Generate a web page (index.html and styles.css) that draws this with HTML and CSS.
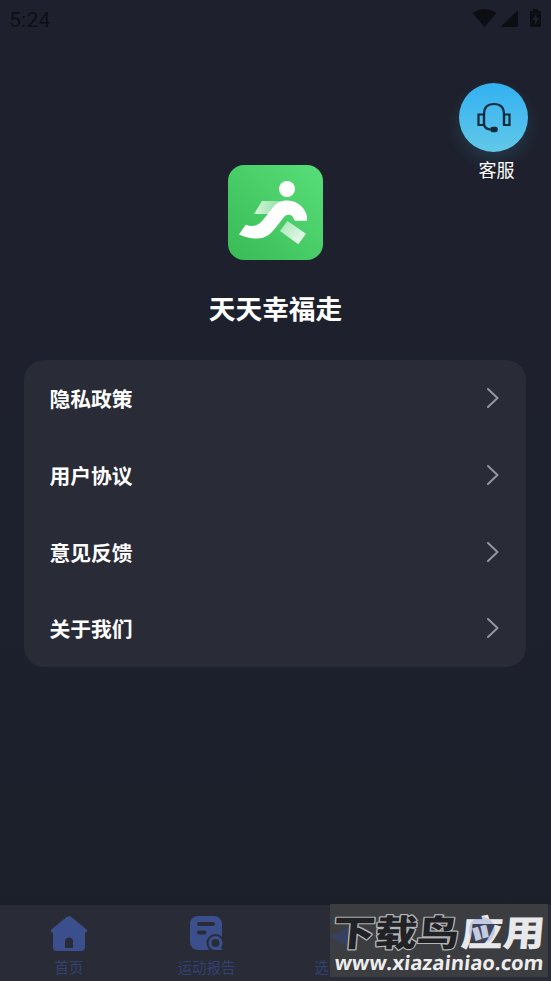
FILE: index.html
```html
<!DOCTYPE html>
<html lang="zh-CN">
<head>
<meta charset="utf-8">
<meta name="viewport" content="width=device-width, initial-scale=1">
<title>天天幸福走</title>
<link rel="stylesheet" href="styles.css">
</head>
<body>
<div class="app">
  <header class="status">
    <span class="time">5:24</span>
    <svg class="status-icons" width="72" height="22" viewBox="0 0 72 22">
      <path d="M.5 4Q12.500-4 24.500 4L12.500 18ZM28.500 18 46 1V18Z"/>
      <path fill-rule="evenodd" d="M61 0h5v2h3v16H58V2h3ZM64.500 4 60.500 11h2.500v5l4-7h-2.500Z"/>
    </svg>
  </header>

  <div class="support-row">
    <div class="support">
      <div class="support-disc">
        <svg width="34" height="32" viewBox="0 0 34 32" fill="none" stroke="#112b3c" stroke-width="2.200">
          <path d="M7 23V12C7 5.500 10.500 2 17 2s10 3.500 10 10V23M7 23c1.500 3.500 3.500 4.500 6.500 4.500"/>
          <path d="M1.500 12.500H7V23H1.500ZM27 12.500h5.500V23H27Z"/>
          <rect x="14" y="25.500" width="6" height="4" rx="1.500" fill="#112b3c" stroke-width="1.500"/>
        </svg>
      </div>
      <span class="support-label">客服</span>
    </div>
  </div>

  <section class="brand">
    <svg class="logo" width="95" height="95" viewBox="0 0 95 95">
      <defs>
        <linearGradient id="tile" x1="0" y1="1" x2="1" y2="0"><stop stop-color="#39bb56"/><stop offset="1" stop-color="#58df79"/></linearGradient>
        <linearGradient id="arm" x1="0" y1="0" x2="1" y2="0"><stop stop-color="#fff" stop-opacity=".8"/><stop offset="1" stop-color="#fff" stop-opacity=".3"/></linearGradient>
        <linearGradient id="leg" x1="0" y1="0" x2="1" y2="1"><stop stop-color="#fff" stop-opacity=".5"/><stop offset="1" stop-color="#fff" stop-opacity=".95"/></linearGradient>
      </defs>
      <rect width="95" height="95" rx="16" fill="url(#tile)"/>
      <path fill="url(#arm)" d="M34 36H57L45 49H26Z"/>
      <path fill="url(#leg)" d="M59.500 56 78 68.700 70.300 79.300 52 66Z"/>
      <circle cx="59" cy="24" r="8" fill="#fff"/>
      <path fill="#fff" d="M17.700 59.700C23 61.500 28 61.500 32 58C36 54.500 41 47 46 41C50 36.500 55 35.300 60 35.500C70 35.800 78 44 79 52V55.700H67.500C65.500 55.700 66 52 63.500 50.500C61 49 58 49.500 56 52L47 63.500C41 71 36 73.300 29 73.500C22 73.600 16 72 11 69.500Z"/>
    </svg>
    <h1>天天幸福走</h1>
  </section>

  <main class="menu">
    <div class="item"><span>隐私政策</span><svg class="chevron" viewBox="0 0 12 20"><path d="M1 1 10.500 10 1 19"/></svg></div>
    <div class="item"><span>用户协议</span><svg class="chevron" viewBox="0 0 12 20"><path d="M1 1 10.500 10 1 19"/></svg></div>
    <div class="item"><span>意见反馈</span><svg class="chevron" viewBox="0 0 12 20"><path d="M1 1 10.500 10 1 19"/></svg></div>
    <div class="item"><span>关于我们</span><svg class="chevron" viewBox="0 0 12 20"><path d="M1 1 10.500 10 1 19"/></svg></div>
  </main>

  <nav class="tabs">
    <div class="tab">
      <svg width="38" height="36" viewBox="0 0 38 36"><path fill-rule="evenodd" d="M16 1.500Q19-1 22 1.500L36.500 13.500Q38 15.500 36 16.500H35V31Q35 35 31 35H7Q3 35 3 31V16.500H2Q0 15.500 1.500 13.500ZM15 32H23V25.500C23 20 15 20 15 25.500Z"/></svg>
      <span>首页</span>
    </div>
    <div class="tab">
      <svg width="34" height="36" viewBox="0 0 34 36">
        <rect x="0" width="32" height="34" rx="8"/>
        <path class="cut" stroke-width="4" d="M9 8H23M9 16.500H14.500"/>
        <circle class="badge" cx="25.500" cy="27" r="9"/>
        <circle class="ring" cx="25.500" cy="27" r="5.500"/>
        <path d="M29 29 33 34H26Z"/>
      </svg>
      <span>运动报告</span>
    </div>
    <div class="tab tab-partial">
      <span>选</span>
    </div>
  </nav>

  <svg class="watermark" width="218" height="73" viewBox="0 0 218 73">
    <rect width="218" height="73" fill="#3b3d40"/>
    <path fill="#334684" fill-opacity=".45" d="M0 33 20 22V44Z"/>
    <g class="wm-title" transform="translate(0 42) skewX(-5)">
      <text class="wm-dark" x="2" y="0" textLength="126" lengthAdjust="spacingAndGlyphs">下载鸟</text>
      <text class="wm-light" x="130" y="0" textLength="84" lengthAdjust="spacingAndGlyphs">应用</text>
    </g>
    <circle cx="152" cy="26" r="13" fill="#4259b5" fill-opacity=".22"/>
    <g transform="translate(4 66) skewX(-6)">
      <text class="wm-url" x="0" y="0" textLength="209" lengthAdjust="spacingAndGlyphs">www.xiazainiao.com</text>
    </g>
  </svg>
</div>
</body>
</html>
```
FILE: styles.css
```css
* { box-sizing: border-box; }
body {
  margin: 0;
  background: #1e202c;
  color: #fff;
  font-family: "Noto Sans CJK SC", sans-serif;
}
.app {
  position: relative;
  display: flex;
  flex-direction: column;
  height: 981px;
  overflow: hidden;
  background: linear-gradient(#1e212d, #1d212d 60%, #1b1f2a);
}
.status {
  display: flex;
  justify-content: space-between;
  align-items: flex-start;
  height: 83px;
  padding: 9px 7px 0 9px;
  color: #0d0f17;
}
.time { font: 21px/22px Roboto, sans-serif; letter-spacing: .3px; }
.status-icons { fill: #0c0e13; }
.support-row {
  display: flex;
  justify-content: flex-end;
  height: 82.4px;
  padding-right: 23px;
}
.support {
  display: flex;
  flex-direction: column;
  align-items: center;
  width: 69px;
}
.support-disc {
  display: flex;
  flex: none;
  align-items: center;
  justify-content: center;
  width: 69px;
  height: 69px;
  border-radius: 50%;
  background: linear-gradient(#32b1f2, #62c8e8);
  box-shadow: 0 8px 16px rgba(75, 190, 230, .15);
}
.support-label {
  margin: 4px 0 0 6px;
  font-size: 18px;
  line-height: 27px;
}
.brand {
  display: flex;
  flex-direction: column;
  align-items: center;
  height: 194.6px;
}
.logo { flex: none; }
h1 {
  margin: 28px 0 0;
  font-size: 26.7px;
  font-weight: 700;
  line-height: 40px;
}
.menu {
  width: 502px;
  margin-left: 24.4px;
  border-radius: 20px;
  background: #292b37;
}
.item {
  display: flex;
  align-items: center;
  justify-content: space-between;
  height: 76.7px;
  padding: 0 27px 0 25px;
  font-size: 20.800px;
  font-weight: 700;
}
.chevron {
  width: 12px;
  height: 20px;
  fill: none;
  stroke: #9495a0;
  stroke-width: 2;
  stroke-linecap: round;
  stroke-linejoin: round;
}
.tabs {
  display: grid;
  grid-template-columns: repeat(4, 1fr);
  height: 76.5px;
  margin-top: auto;
  padding-top: 11.5px;
  background: #292b36;
  color: #334273;
}
.tab {
  display: flex;
  flex-direction: column;
  align-items: center;
  font-size: 14.500px;
  line-height: 22px;
}
.tab svg { fill: #3b4f8c; }
.tab span { margin-top: 4px; }
.tab-partial { align-items: flex-start; padding: 36px 0 0 39px; }
.tab .cut { stroke: #292b36; stroke-linecap: round; }
.tab .badge { fill: #292b36; }
.tab .ring { fill: none; stroke: #3b4f8c; stroke-width: 3; }
.watermark {
  position: absolute;
  right: 3px;
  bottom: 4px;
}
.wm-title { font-size: 36px; font-weight: 900; }
.wm-dark {
  fill: #202225;
  stroke: #b4b4b4;
  stroke-width: 2.400;
  stroke-linejoin: round;
  paint-order: stroke;
}
.wm-light { fill: #e9e9ec; }
.wm-url {
  fill: #ededed;
  font: 700 20px "Open Sans", sans-serif;
}
```
